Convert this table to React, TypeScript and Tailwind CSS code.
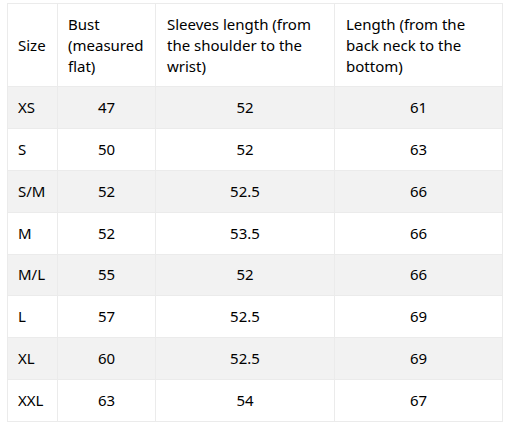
const rows = [
  ['XS', '47', '52', '61'],
  ['S', '50', '52', '63'],
  ['S/M', '52', '52.5', '66'],
  ['M', '52', '53.5', '66'],
  ['M/L', '55', '52', '66'],
  ['L', '57', '52.5', '69'],
  ['XL', '60', '52.5', '69'],
  ['XXL', '63', '54', '67'],
];

export default function App() {
  return (
    <div className="min-h-screen bg-white pl-[7px] pt-[3px] text-[15px] leading-[21px] text-black" style={{ fontFamily: '"Noto Sans", sans-serif' }}>
      <table className="w-[495px] table-fixed border-collapse">
        <colgroup>
          <col className="w-[50px]" />
          <col className="w-[98px]" />
          <col className="w-[179px]" />
          <col className="w-[168px]" />
        </colgroup>
        <thead>
          <tr className="h-[83px]">
            <th className="border border-[#ebebeb] px-[10px] text-left font-normal">Size</th>
            <th className="border border-[#ebebeb] px-[10px] text-left font-normal">Bust (measured flat)</th>
            <th className="border border-[#ebebeb] px-[11px] text-left font-normal">Sleeves length (from the shoulder to the wrist)</th>
            <th className="border border-[#ebebeb] px-[11px] text-left font-normal">Length (from the back neck to the bottom)</th>
          </tr>
        </thead>
        <tbody>
          {rows.map((r, i) => (
            <tr key={r[0]} className={`h-[41.875px] ${i % 2 === 0 ? 'bg-[#f2f2f2]' : 'bg-white'}`}>
              <td className="border border-[#ebebeb] px-[10px] text-left">{r[0]}</td>
              <td className="border border-[#ebebeb] px-[10px] text-center">{r[1]}</td>
              <td className="border border-[#ebebeb] px-[10px] text-center">{r[2]}</td>
              <td className="border border-[#ebebeb] px-[10px] text-center">{r[3]}</td>
            </tr>
          ))}
        </tbody>
      </table>
    </div>
  );
}
